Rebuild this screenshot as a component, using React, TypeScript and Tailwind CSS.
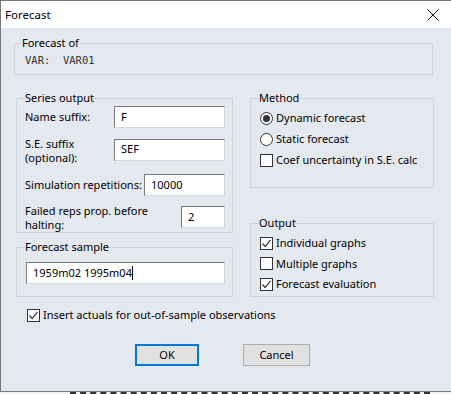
import React from "react";

const font = "font-['Noto_Sans',_'Liberation_Sans',_sans-serif]";

function Check({ checked }: { checked: boolean }) {
  return (
    <span className="w-[13px] h-[13px] border border-[#333333] bg-white flex items-center justify-center shrink-0">
      {checked && (
        <svg width="11" height="11" viewBox="0 0 11 11">
          <polyline points="1.5,5.5 4.2,8.5 9.5,1.8" fill="none" stroke="#333333" strokeWidth="1.2" />
        </svg>
      )}
    </span>
  );
}

function Radio({ checked }: { checked: boolean }) {
  return (
    <span className="w-[13px] h-[13px] rounded-full border border-[#333333] bg-white flex items-center justify-center shrink-0">
      {checked && <span className="w-[7px] h-[7px] rounded-full bg-[#333333]" />}
    </span>
  );
}

function Input({ value, w, caret }: { value: string; w: string; caret?: boolean }) {
  return (
    <div
      className={`${w} h-[22px] bg-white border border-t-[#7a7a7a] border-l-[#7a7a7a] border-r-[#d6d6d6] border-b-[#d6d6d6] flex items-center pl-[6px] text-[11px] text-black`}
    >
      {value}
      {caret && <span className="w-[1px] h-[14px] bg-black" />}
    </div>
  );
}

export default function App() {
  return (
    <div className={`${font} w-[451px] h-[394px] flex flex-col bg-[#f2f2f2]`}>
      <div className="w-[451px] h-[392px] flex flex-col bg-[#e4e9f0] border-t border-l border-b border-[#777777] shrink-0">
        {/* Title bar */}
        <div className="h-[27px] bg-white flex items-center justify-between pl-[4px] pr-[12px] shrink-0">
          <span className="text-[11.5px] text-black">Forecast</span>
          <svg width="12" height="12" viewBox="0 0 12 12">
            <path d="M0.5 0.5 L11.5 11.5 M11.5 0.5 L0.5 11.5" stroke="#111" strokeWidth="1" />
          </svg>
        </div>

        {/* Forecast of */}
        <fieldset className="ml-[13px] mt-[8px] w-[419px] h-[39px] border border-[#ccd2da] pl-[10px] pt-[3px] text-[11px]">
          <legend className="ml-[-3px] leading-[14px] text-black">Forecast of</legend>
          <div className="font-['DejaVu_Sans_Mono',_monospace] text-[10.5px] text-[#333] leading-[14px] whitespace-pre">
            {"VAR:  VAR01"}
          </div>
        </fieldset>

        <div className="flex mt-[16px]">
          {/* Left column */}
          <div className="ml-[15px] w-[217px] flex flex-col">
            <fieldset className="h-[142px] border border-[#ccd2da] pl-[8px] pr-[7px] pt-[1px] text-[11px] text-black">
              <legend className="leading-[14px]">Series output</legend>
              <div className="flex items-center justify-between">
                <span>Name suffix:</span>
                <Input value="F" w="w-[111px]" />
              </div>
              <div className="flex items-center justify-between mt-[6px]">
                <span className="leading-[14px] pt-[3px]">
                  S.E. suffix
                  <br />
                  (optional):
                </span>
                <Input value="SEF" w="w-[111px]" />
              </div>
              <div className="flex items-center justify-between mt-[9px]">
                <span>Simulation repetitions:</span>
                <Input value="10000" w="w-[81px]" />
              </div>
              <div className="flex items-center justify-between mt-[6px]">
                <span className="leading-[14px] pt-[2px]">
                  Failed reps prop. before
                  <br />
                  halting:
                </span>
                <Input value="2" w="w-[44px]" />
              </div>
            </fieldset>

            <fieldset className="mt-[7px] h-[57px] border border-[#ccd2da] pl-[9px] pt-[8px] text-[11px] text-black">
              <legend className="ml-[-1px] leading-[14px]">Forecast sample</legend>
              <Input value="1959m02 1995m04" w="w-[199px]" caret />
            </fieldset>
          </div>

          {/* Right column */}
          <div className="ml-[17px] w-[184px] flex flex-col">
            <fieldset className="h-[97px] border border-[#ccd2da] pl-[9px] pt-[3px] text-[11px] text-black">
              <legend className="ml-[-1px] leading-[14px]">Method</legend>
              <div className="h-[21px] flex items-center gap-[3px]">
                <Radio checked />
                <span>Dynamic forecast</span>
              </div>
              <div className="h-[21px] flex items-center gap-[3px]">
                <Radio checked={false} />
                <span>Static forecast</span>
              </div>
              <div className="h-[21px] flex items-center gap-[3px]">
                <Check checked={false} />
                <span>Coef uncertainty in S.E. calc</span>
              </div>
            </fieldset>

            <fieldset className="mt-[28px] h-[81px] border border-[#ccd2da] pl-[9px] pt-[3px] text-[11px] text-black">
              <legend className="ml-[-1px] leading-[14px]">Output</legend>
              <div className="h-[20.5px] flex items-center gap-[3px]">
                <Check checked />
                <span>Individual graphs</span>
              </div>
              <div className="h-[20.5px] flex items-center gap-[3px]">
                <Check checked={false} />
                <span>Multiple graphs</span>
              </div>
              <div className="h-[20.5px] flex items-center gap-[3px]">
                <Check checked />
                <span>Forecast evaluation</span>
              </div>
            </fieldset>
          </div>
        </div>

        <div className="ml-[26px] mt-[12px] flex items-center gap-[3px] text-[11px] text-black h-[13px]">
          <Check checked />
          <span>Insert actuals for out-of-sample observations</span>
        </div>

        <div className="flex mt-[22px] text-[11px] text-black">
          <button className="ml-[134px] w-[64px] h-[22px] bg-[#e1e1e1] border-2 border-[#0078d7] flex items-center justify-center">
            OK
          </button>
          <button className="ml-[44px] w-[67px] h-[22px] bg-[#e1e1e1] border border-[#adadad] flex items-center justify-center">
            Cancel
          </button>
        </div>
      </div>
      <div className="h-[2px] ml-[70px] w-[360px] border-b-2 border-dashed border-[#333333]" />
    </div>
  );
}
